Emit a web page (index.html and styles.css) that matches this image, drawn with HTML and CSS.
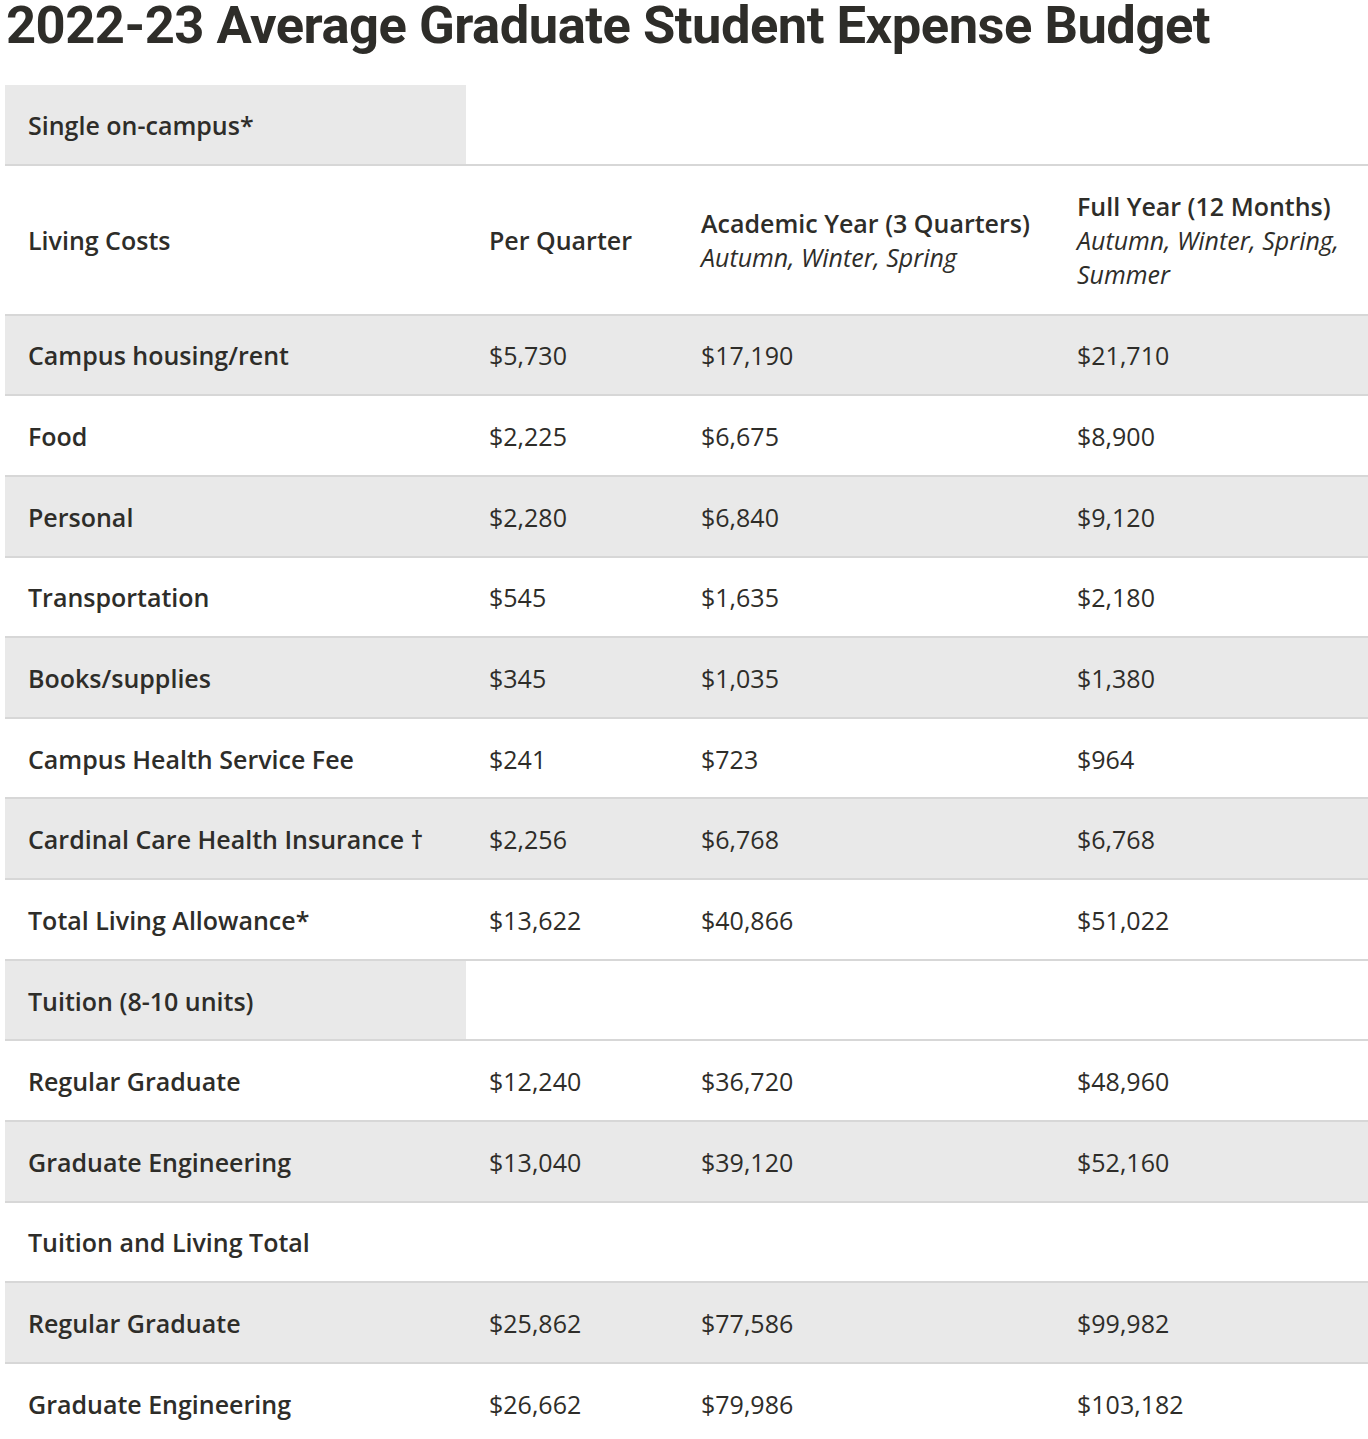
FILE: index.html
```html
<!DOCTYPE html>
<html lang="en">
<head>
<meta charset="utf-8">
<title>2022-23 Average Graduate Student Expense Budget</title>
<link rel="stylesheet" href="styles.css">
</head>
<body>
<main class="page">
  <h1 class="title">2022-23 Average Graduate Student Expense Budget</h1>
  <table class="budget">
    <colgroup>
      <col class="c1"><col class="c2"><col class="c3"><col class="c4">
    </colgroup>
    <thead>
      <tr class="section">
        <th class="label shade">Single on-campus*</th>
        <td class="blank"></td><td class="blank"></td><td class="blank"></td>
      </tr>
      <tr class="head">
        <th class="label">Living Costs</th>
        <th class="hcol">Per Quarter</th>
        <th class="hcol">Academic Year (3 Quarters)<br><em>Autumn, Winter, Spring</em></th>
        <th class="hcol last">Full Year (12 Months)<br><em>Autumn, Winter, Spring, Summer</em></th>
      </tr>
    </thead>
    <tbody>
      <tr class="odd"><th class="label">Campus housing/rent</th><td>$5,730</td><td>$17,190</td><td>$21,710</td></tr>
      <tr><th class="label">Food</th><td>$2,225</td><td>$6,675</td><td>$8,900</td></tr>
      <tr class="odd"><th class="label">Personal</th><td>$2,280</td><td>$6,840</td><td>$9,120</td></tr>
      <tr><th class="label">Transportation</th><td>$545</td><td>$1,635</td><td>$2,180</td></tr>
      <tr class="odd"><th class="label">Books/supplies</th><td>$345</td><td>$1,035</td><td>$1,380</td></tr>
      <tr><th class="label">Campus Health Service Fee</th><td>$241</td><td>$723</td><td>$964</td></tr>
      <tr class="odd"><th class="label">Cardinal Care Health Insurance †</th><td>$2,256</td><td>$6,768</td><td>$6,768</td></tr>
      <tr><th class="label">Total Living Allowance*</th><td>$13,622</td><td>$40,866</td><td>$51,022</td></tr>
      <tr class="section"><th class="label shade">Tuition (8-10 units)</th><td class="blank"></td><td class="blank"></td><td class="blank"></td></tr>
      <tr><th class="label">Regular Graduate</th><td>$12,240</td><td>$36,720</td><td>$48,960</td></tr>
      <tr class="odd"><th class="label">Graduate Engineering</th><td>$13,040</td><td>$39,120</td><td>$52,160</td></tr>
      <tr class="section"><th class="label">Tuition and Living Total</th><td class="blank"></td><td class="blank"></td><td class="blank"></td></tr>
      <tr class="odd"><th class="label">Regular Graduate</th><td>$25,862</td><td>$77,586</td><td>$99,982</td></tr>
      <tr><th class="label">Graduate Engineering</th><td>$26,662</td><td>$79,986</td><td>$103,182</td></tr>
    </tbody>
  </table>
</main>
</body>
</html>
```

FILE: styles.css
```css
html, body {
  margin: 0;
  padding: 0;
  background: #ffffff;
  overflow-x: hidden;
}

body {
  font-family: "Open Sans", Roboto, "Liberation Sans", sans-serif;
  color: #2e2d29;
}

.page {
  padding-left: 5px;
}

.title {
  margin: 0;
  padding: 0 0 0 1px;
  font-family: Roboto, "Liberation Sans", sans-serif;
  font-size: 52.5px;
  line-height: 50px;
  height: 85px;
  font-weight: 700;
  letter-spacing: -0.5px;
  color: #2e2d29;
  white-space: nowrap;
}

.budget {
  width: 1363px;
  table-layout: fixed;
  border-collapse: collapse;
  border-spacing: 0;
  font-size: 25px;
  line-height: 34px;
}

.c1 { width: 461px; }
.c2 { width: 212px; }
.c3 { width: 376px; }
.c4 { width: 314px; }

.budget th,
.budget td {
  padding: 22.8px 23px 21.85px 23px;
  text-align: left;
  vertical-align: middle;
  border-bottom: 2px solid #d7d7d7;
}

.budget td {
  font-weight: 400;
}

.budget .label {
  font-weight: 600;
}

.budget .hcol {
  font-weight: 600;
}

.budget .hcol em {
  font-weight: 400;
  font-style: italic;
}

.budget .last {
  padding-right: 4px;
}

.budget tr.head th {
  padding-top: 23px;
  padding-bottom: 23px;
}

.budget tr.odd th,
.budget tr.odd td,
.budget .shade {
  background: #e9e9e9;
}

.budget .blank {
  background: #ffffff;
}
```
